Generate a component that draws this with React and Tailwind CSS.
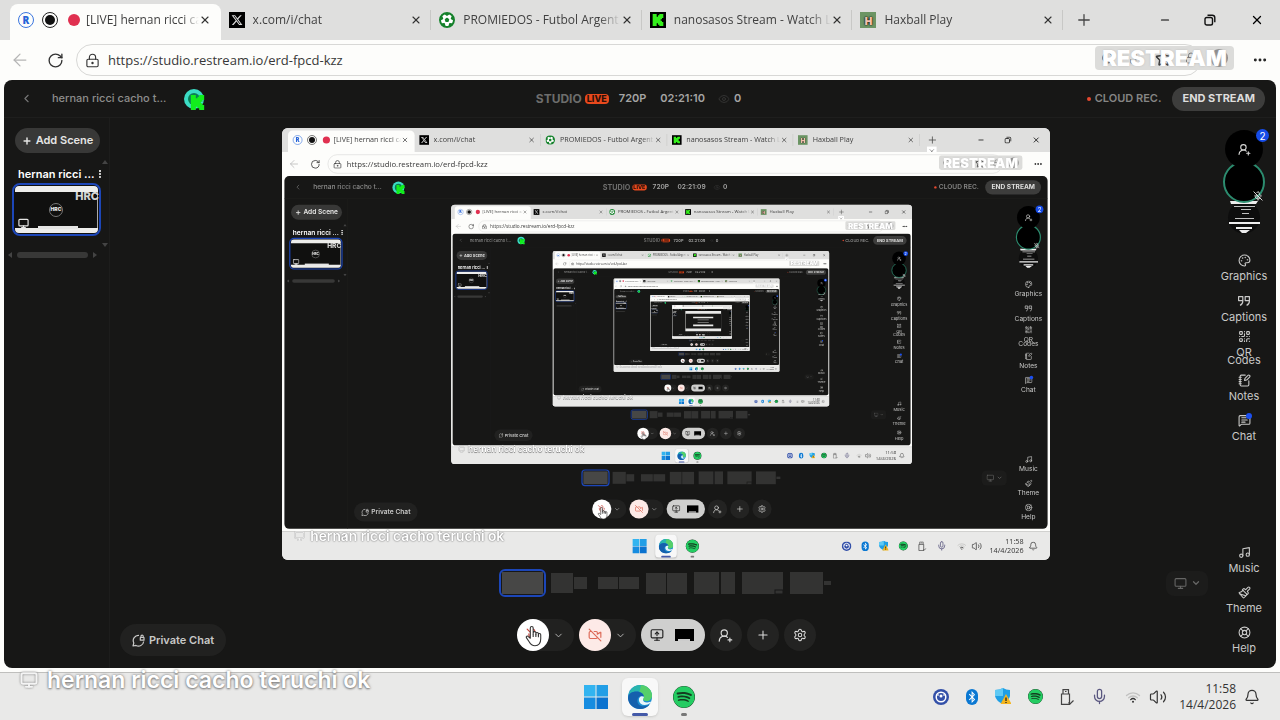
import React from "react";
import {
  ArrowLeft, ChevronDown, ChevronLeft, Plus, Minus, X, RotateCw, LockKeyhole, Ellipsis, EllipsisVertical,
  Eye, UserRoundPlus, Palette, QrCode, NotebookPen, MessageSquareText, Music, Paintbrush, LifeBuoy,
  Monitor, MonitorUp, VideoOff, MicOff, Settings, Mic, Wifi, Volume2, Bell, Star,
  Search, Download, Lock,
} from "lucide-react";
import { FaXTwitter, FaFutbol, FaSpotify, FaBluetoothB } from "react-icons/fa6";
import { SiKick } from "react-icons/si";

const MAX_DEPTH = 6;

const tabs = [
  { title: "x.com/i/chat", icon: <XIcon /> },
  { title: "PROMIEDOS - Futbol Argent", icon: <span className="grid size-4 place-items-center rounded-full bg-white"><FaFutbol className="size-4 text-[#15802b]" /></span> },
  { title: "nanosasos Stream - Watch Li", icon: <span className="grid size-4 place-items-center bg-black"><SiKick className="size-3 text-[#35f01c]" /></span> },
  { title: "Haxball Play", icon: <span className="grid size-4 place-items-center bg-[#6c9564] text-[11px] leading-none font-black text-[#f3c1ae] [text-shadow:0_0_2px_#000,0_0_1px_#000]">H</span> },
];

function XIcon() {
  return <span className="grid size-4 place-items-center bg-black"><FaXTwitter className="size-3 text-[#dcdcdc]" /></span>;
}

function TabTitle({ children }) {
  return (
    <span className="min-w-0 flex-1 overflow-hidden text-[12px] leading-5 whitespace-nowrap text-[#404040] [mask-image:linear-gradient(to_right,#000_86%,transparent)]">
      {children}
    </span>
  );
}

function TabStrip({ nested }) {
  return (
    <div className="flex h-10 shrink-0 bg-[#dfdfde] font-['Open_Sans',sans-serif]">
      <div className="grid min-w-0 flex-1 grid-cols-5 pl-[10px]">
        <div className="mt-1 flex min-w-0 items-center gap-2 rounded-t-lg bg-[#fdfdfb] pr-[10px] pb-1 pl-2">
          <span className="grid size-4 shrink-0 place-items-center rounded-full border border-[#3b76df] text-[10px] leading-none font-black text-[#2563d8]">R</span>
          <span className="grid size-4 shrink-0 place-items-center rounded-full border border-[#222]"><span className="size-[10px] rounded-full bg-[#111]" /></span>
          <span className="grid size-4 shrink-0 place-items-center"><span className="size-3 rounded-full bg-[#e03050]" /></span>
          <span className="-mr-2 -ml-1 flex min-w-0 flex-1"><TabTitle>[LIVE] hernan ricci ca</TabTitle></span>
          <button aria-label="Close tab"><X className="size-3 text-[#333]" strokeWidth={2.2} /></button>
        </div>
        {tabs.map((t) => (
          <div key={t.title} className="flex min-w-0 items-center">
            <div className="flex min-w-0 flex-1 items-center gap-2 pr-2 pl-2">
              <span className="shrink-0">{t.icon}</span>
              <span className="-mr-2 flex min-w-0 flex-1"><TabTitle>{t.title}</TabTitle></span>
              <button aria-label="Close tab"><X className="size-3 text-[#333]" strokeWidth={2.2} /></button>
            </div>
            <span className="h-5 w-px bg-[#c8c8c6]" />
          </div>
        ))}
      </div>
      <div className="flex w-[217px] shrink-0 items-center pr-4 pl-3">
        <button aria-label="New tab" className="relative">
          <Plus className="size-[18px] text-[#444]" strokeWidth={1.7} />
          {nested && <span className="absolute top-5 left-0 grid size-4 place-items-center bg-white"><X className="size-3 text-[#555]" /></span>}
        </button>
        <button aria-label="Minimize" className="mr-[33px] ml-auto"><Minus className="size-3 text-black" strokeWidth={2.4} /></button>
        <button aria-label="Restore" className="mr-[34px]">
          <svg viewBox="0 0 12 12" className="size-3" fill="none" stroke="#111" strokeWidth="1.4"><rect x="1" y="3.5" width="7.5" height="7.5" rx="1.8" /><path d="M3.5 1.2h4.7a2.6 2.6 0 0 1 2.6 2.6v4.4" /></svg>
        </button>
        <button aria-label="Close window"><X className="size-[14px] text-black" strokeWidth={2.2} /></button>
      </div>
    </div>
  );
}

function Toolbar() {
  return (
    <div className="relative flex h-10 shrink-0 items-center bg-[#fdfdfb] pr-3 pl-[10px] font-['Open_Sans',sans-serif]">
      <button aria-label="Back"><ArrowLeft className="size-5 text-[#b5b5b5]" strokeWidth={1.5} /></button>
      <button aria-label="Reload" className="mr-3 ml-[17px]"><RotateCw className="size-[17px] text-[#333]" strokeWidth={1.9} /></button>
      <label className="mr-[51px] flex h-8 flex-1 items-center gap-2 rounded-full border border-[#d8d8d6] px-2">
        <LockKeyhole className="size-[15px] text-[#333]" strokeWidth={1.8} />
        <input aria-label="Address" defaultValue="https://studio.restream.io/erd-fpcd-kzz" className="flex-1 bg-transparent text-[13px] leading-5 text-[#383838] outline-none" />
      </label>
      <button aria-label="Settings and more"><Ellipsis className="size-4 text-[#222]" strokeWidth={2.4} /></button>
      <div className="absolute top-[6px] right-[46px] flex h-6 w-[139px] items-center justify-around rounded-sm bg-[#dcdcda]">
        <Search className="size-[15px] text-[#333]" />
        <Download className="size-[14px] text-[#666]" />
        <Star className="size-[17px] text-[#333]" />
        <Lock className="size-3 text-[#777]" />
        <span className="size-[18px] rounded-full bg-[#8b8b8b]" />
        <span className="absolute inset-0 text-center font-['Inter',sans-serif] text-[22px] leading-6 font-black text-white [text-shadow:0_0_2px_#bbb]">RESTREAM</span>
      </div>
    </div>
  );
}

function StudioHeader({ clock }) {
  return (
    <header className="grid h-[38px] shrink-0 grid-cols-[1fr_auto_1fr] items-center border-b border-[#1e1e1d] pr-[11px] pl-4 text-[11px] font-semibold text-[#a5a5a4]">
      <div className="flex items-center">
        <button aria-label="Back to studio list"><ChevronLeft className="size-[13px] text-[#777]" /></button>
        <span className="ml-[19px] font-medium text-[#8d8d8c]">hernan ricci cacho t...</span>
        <span className="relative ml-[18px] grid size-5 place-items-center rounded-full bg-[#3bdcc4]">
          <span className="size-3 rounded-full bg-[#0b7d55]" />
          <SiKick className="absolute -right-px -bottom-px size-[15px] text-[#12ee1c]" />
        </span>
      </div>
      <div className="mr-2 flex items-center">
        <span className="text-[12px] font-bold text-[#6d6d6c]">STUDIO</span>
        <span className="ml-[3px] rounded-sm bg-[#e8491d] px-[2px] text-[9px] leading-[10px] font-extrabold text-[#2c1008]">LIVE</span>
        <span className="ml-[10px]">720P</span>
        <span className="ml-[14px]">02:21:{clock}</span>
        <Eye className="ml-[13px] size-3 text-[#333332]" />
        <span className="ml-1">0</span>
      </div>
      <div className="flex items-center justify-end">
        <span className="mr-1 size-1 rounded-full bg-[#e5482f]" />
        <span className="mr-[11px] text-[#858584]">CLOUD REC.</span>
        <button className="h-6 rounded-full bg-[#3d3d3c] px-[10px] font-bold text-[#dededd]">END STREAM</button>
      </div>
    </header>
  );
}

function ScenePanel() {
  return (
    <aside className="flex w-[106px] shrink-0 flex-col border-r border-[#1d1d1c] pt-[10px] pl-1 text-[11px] text-[#e5e5e4]">
      <button className="ml-[7px] flex h-[25px] w-[85px] items-center justify-center gap-1 rounded-full bg-[#383837] font-semibold"><Plus className="size-[10px]" strokeWidth={3.5} />Add Scene</button>
      <svg viewBox="0 0 6 4" className="mt-[7px] mr-px h-1 w-[6px] self-end"><path d="M3 0 6 4H0z" fill="#444" /></svg>
      <div className="mt-[2px] mr-[5px] ml-1 flex h-4 items-center font-semibold text-white">
        <span className="mr-1 ml-[2px] h-2 w-px bg-[#1f4fd0]" />
        <span className="flex-1 whitespace-nowrap">hernan ricci ...</span>
        <button aria-label="Scene options"><EllipsisVertical className="size-[10px]" strokeWidth={3} /></button>
      </div>
      <button aria-label="Scene hernan ricci" className="relative mt-px mr-2 ml-1 flex h-[53px] flex-col overflow-hidden rounded-lg border-2 border-[#1c46b8] bg-[#10100f] p-px">
        <span className="h-[6px] w-full rounded-t-sm bg-[#ededeb]" />
        <span className="flex w-full flex-1 items-center justify-center border-r border-[#aaa]">
          <span className="grid size-[14px] place-items-center rounded-full border border-[#777] text-[5px] font-black">HRC</span>
        </span>
        <span className="h-[5px] w-full rounded-b-sm bg-[#ededeb]" />
        <span className="absolute top-[5px] right-0 text-[11px] leading-3 font-extrabold text-[#d4d4d3]">HRC</span>
        <Monitor className="absolute bottom-[5px] left-1 size-[11px]" strokeWidth={2.6} />
        <span className="absolute bottom-[5px] left-6 h-[3px] w-10 bg-[#e4e4e3]" />
      </button>
      <svg viewBox="0 0 6 4" className="mt-[7px] mr-px h-1 w-[6px] self-end"><path d="M0 0H6L3 4z" fill="#444" /></svg>
      <div className="mt-[5px] mr-3 flex items-center justify-between">
        <svg viewBox="0 0 4 6" className="h-[6px] w-1"><path d="M4 0V6L0 3z" fill="#444" /></svg>
        <span className="h-[6px] w-[71px] rounded-full bg-[#383837]" />
        <svg viewBox="0 0 4 6" className="h-[6px] w-1"><path d="M0 0V6L4 3z" fill="#444" /></svg>
      </div>
    </aside>
  );
}

function Captions99() {
  return (
    <svg viewBox="0 0 14 14" className="size-[14px]" fill="none" stroke="currentColor" strokeWidth="1.2" strokeLinejoin="round">
      <path d="M5.8 6.6H1.6V2.6H5.8V7.2C5.8 9.2 4.8 10.6 3 11.4" />
      <path d="M12.4 6.6H8.2V2.6H12.4V7.2C12.4 9.2 11.4 10.6 9.6 11.4" />
    </svg>
  );
}

function PrivateChatIcon() {
  return (
    <svg viewBox="0 0 13 13" className="size-[13px]" fill="none" stroke="currentColor" strokeWidth="1.2" strokeLinejoin="round">
      <path d="M7 1.500A5.200 5.200 0 0 0 1.800 9L1 12l3-.6A5.200 5.200 0 0 0 11.700 7.500" />
      <path d="M8.300 3.500h3.700v2.700H8.300zM9 3.500V2.300a1.100 1.100 0 0 1 2.200 0V3.500" />
    </svg>
  );
}

function SideItem({ icon, label, dot }) {
  return (
    <button className="flex h-10 w-full flex-col items-center justify-center gap-[5px] text-[11px] leading-[8px] text-[#c9c9c8]">
      <span className="relative shrink-0">
        {icon}
        {dot && <span className="absolute -top-px -right-px size-[6px] rounded-full bg-[#1b4ff0]" />}
      </span>
      <span className="whitespace-pre-line">{label}</span>
    </button>
  );
}

function RightRail() {
  const c = "size-[13px]";
  return (
    <nav className="flex w-16 shrink-0 flex-col items-center pt-3 pb-[9px]">
      <div className="relative z-10">
        <button aria-label="Invite guests" className="grid size-[38px] place-items-center rounded-full bg-black"><UserRoundPlus className="size-[13px] text-[#d8d8d7]" /></button>
        <span className="absolute -top-px -right-[6px] grid size-[13px] place-items-center rounded-full bg-[#164ce8] text-[10px] leading-none text-white">2</span>
      </div>
      <div className="relative -mt-[7px] size-[42px] rounded-full border-2 border-[#2c8c6f] bg-black">
        <MicOff className="absolute right-0 bottom-0 size-[10px] text-white" />
      </div>
      <svg viewBox="0 0 34 33" className="mt-[-2px] h-[33px] w-[34px]">
        <circle cx="17" cy="16.5" r="16" fill="#0d0d0d" />
        <g fill="#ededed"><path d="M3 0H31L29 3H4zM2 21H33V23H2zM9 26H25V28H9zM12 29H23L19 32H15z" /><path d="M7 5h21v1H7zM14 8h10v1H14zM15 12h7v1h-7zM8 17h19v1H8z" opacity=".8" /></g>
      </svg>
      <div className="mt-[13px] w-full">
        <SideItem icon={<Palette className={c} />} label="Graphics" />
        <SideItem icon={<Captions99 />} label="Captions" />
        <SideItem icon={<QrCode className={c} />} label={"QR\nCodes"} />
        <SideItem icon={<NotebookPen className={c} />} label="Notes" />
        <SideItem icon={<MessageSquareText className={c} />} label="Chat" dot />
      </div>
      <div className="mt-auto w-full">
        <SideItem icon={<Music className={c} />} label="Music" />
        <SideItem icon={<Paintbrush className={c} />} label="Theme" />
        <SideItem icon={<LifeBuoy className={c} />} label="Help" />
      </div>
    </nav>
  );
}

const layouts = [
  { name: "Single", parts: [[0, 0, 41, 22]] },
  { name: "Focus with side", parts: [[1, 1, 22, 20], [24, 5, 13, 12]] },
  { name: "Wide pair", parts: [[0, 5, 20, 12], [21, 5, 20, 12]] },
  { name: "Split", parts: [[0, 1, 20, 21], [21, 1, 20, 21]] },
  { name: "Two thirds", parts: [[0, 0, 25, 22], [27, 0, 14, 22]] },
  { name: "Picture in picture", parts: [[0, 0, 41, 22], [33, 18, 8, 4]] },
  { name: "Presenter", parts: [[0, 0, 33, 22], [34, 9, 7, 4]] },
];

function LayoutPicker() {
  return (
    <div className="flex gap-px">
      {layouts.map((l, i) => (
        <button key={l.name} aria-label={l.name} className={i === 0 ? "grid h-7 w-[47px] place-items-center rounded-md border-2 border-[#1c46b8]" : "grid h-7 w-[47px] place-items-center"}>
          <svg viewBox="0 0 41 22" className="h-[22px] w-[41px]">
            {l.parts.map(([x, y, w, h], k) => (
              <rect key={k} x={x} y={y} width={w} height={h} fill={i === 0 ? "#474746" : "#333332"} stroke={l.name === "Picture in picture" && k ? "#171716" : "none"} />
            ))}
          </svg>
        </button>
      ))}
    </div>
  );
}

function HandCursor() {
  return (
    <svg viewBox="0 0 20 24" className="h-[22px] w-[18px]" fill="#fff" stroke="#333" strokeWidth="1.2" strokeLinejoin="round">
      <path d="M7 14.5V3a1.6 1.6 0 0 1 3.2 0v7V8.6a1.5 1.5 0 0 1 3 0v2-1a1.4 1.4 0 0 1 2.8 0v1.6-.6a1.3 1.3 0 0 1 2.6 0V15c0 4.5-2 7.8-6.4 7.8-3.6 0-5-1.6-6.3-4.1L2.6 13.800c-.7-1.500 1.200-2.400 2.200-1.200z" />
      <path d="M10.200 10v3M13.200 10v3M16 11v2.500" fill="none" />
    </svg>
  );
}

function Controls({ nested }) {
  const round = "grid size-8 place-items-center rounded-full bg-[#232322] text-[#dcdcdb]";
  return (
    <div className="mb-[5px] flex gap-[5px]">
      <div className="relative flex w-[57px] rounded-full bg-[#212120]">
        <button aria-label="Unmute microphone" className="grid size-8 place-items-center rounded-full bg-white"><MicOff className="size-[14px] text-[#c9443c]" /></button>
        <button aria-label="Microphone options" className="grid w-5 place-items-center text-[#bcbcbb]"><ChevronDown className="size-[11px]" /></button>
        <span className={nested ? "absolute top-3 left-2" : "absolute top-[6px] left-[7px]"}><HandCursor /></span>
      </div>
      <div className="flex w-[57px] rounded-full bg-[#212120]">
        <button aria-label="Turn camera on" className="grid size-8 place-items-center rounded-full bg-[#fdeae7]"><VideoOff className="size-[14px] text-[#dd6a58]" /></button>
        <button aria-label="Camera options" className="grid w-5 place-items-center text-[#bcbcbb]"><ChevronDown className="size-[11px]" /></button>
      </div>
      <div className="flex h-8 w-16 items-center justify-between rounded-full bg-[#cfcfce] pr-[11px] pl-[9px]">
        <button aria-label="Share screen"><MonitorUp className="size-[14px] text-[#222]" /></button>
        <button aria-label="Shared screen" className="flex h-3 w-[19px] items-end justify-center bg-black"><span className="h-[2px] w-3 bg-[#ccc]" /></button>
      </div>
      <button aria-label="Invite" className={round}><UserRoundPlus className="size-[15px]" strokeWidth={1.8} /></button>
      <button aria-label="Add source" className={round}><Plus className="size-[14px]" strokeWidth={1.8} /></button>
      <button aria-label="Settings" className={round}><Settings className="size-[14px]" strokeWidth={1.8} /></button>
    </div>
  );
}

function TunnelEnd() {
  return (
    <svg viewBox="0 0 32 18" className="size-full">
      <path d="M0 0H32V18H0z" fill="#171716" />
      <path d="M0 0H32V2.500H0zM0 15.500H32V18H0zM7 5H25V6.500H7zM7 12H25V13.500H7z" fill="#e9e9e8" />
      <path d="M11 7.500H21V8.200H11zM11 10H21V10.700H11z" fill="#8a8a89" />
    </svg>
  );
}

function Stage({ depth }) {
  return (
    <main className="flex min-w-0 flex-1 flex-col pt-[10px] pb-3 pl-[10px]">
      <div className="flex min-h-0 flex-1 justify-center">
        <div className="aspect-video h-full overflow-hidden rounded-md bg-[#e9e9e8]" inert aria-hidden="true">
          {depth < MAX_DEPTH ? (
            <div className="h-[166.667%] w-[166.667%] origin-top-left scale-60">
              <Desktop depth={depth + 1} />
            </div>
          ) : (
            <TunnelEnd />
          )}
        </div>
      </div>
      <div className="mt-[9px] grid grid-cols-[1fr_auto_1fr] items-center">
        <span />
        <LayoutPicker />
        <button aria-label="Screen options" className="mr-1 flex h-[25px] w-[42px] items-center justify-center gap-1 justify-self-end rounded-lg bg-[#1c1c1b] text-[#666665]"><Monitor className="size-[13px]" /><ChevronDown className="size-[10px]" strokeWidth={3} /></button>
      </div>
      <div className="mt-[22px] grid grid-cols-[1fr_auto_1fr] items-end">
        <button className="flex h-8 w-[106px] items-center justify-center gap-1 rounded-full bg-[#212120] text-[11px] font-semibold text-[#c9c9c8]"><PrivateChatIcon />Private Chat</button>
        <Controls nested={depth > 0} />
        <span />
      </div>
    </main>
  );
}

function EdgeLogo() {
  return (
    <svg viewBox="0 0 24 24" className="size-6">
      <circle cx="12" cy="12" r="12" fill="#1d8fd0" />
      <path d="M.5 10C2 4 6.500 0 12 0c7 0 12 5 12 10.500 0 3.500-2.500 5.500-5.500 5.500-2 0-3.500-.7-3.500-1.700 0-.6.9-1 .9-2.500C15.900 8.500 12.500 6.500 9 6.500 5 6.500 2 8 .5 10z" fill="#29b6ad" />
      <path d="M13 0c6.500.5 11 5.300 11 10.500 0 3.500-2.500 5.500-5.500 5.500-2 0-3.500-.7-3.500-1.700 0-.6.9-1 .9-2.500 0-2.500-2-4.300-4.400-5z" fill="#55cf6a" />
      <path d="M0 13C.5 8.500 4 6.500 8.500 6.500c4 0 7.400 2.400 7.400 5.300-2-1.500-6-.8-6.500 3.200-.5 4.500 3.500 7.500 9 5.800 1.500-.5 2.500-1 3-1C19.500 22.500 16 24 12 24 5 24 0 18.500 0 13z" fill="#1560ad" />
      <path d="M15.900 11.800c-2.500-1.700-5.400.2-5 3.700.5 4 6 6.500 11.800 2.300.7-.5.2-1.300-.4-1-1.100.5-2.100.7-3.300.7-2.600 0-4-1.400-4-2.800 0-1.300.9-1.400.9-2.900z" fill="#eaf6fb" />
    </svg>
  );
}

function Taskbar() {
  return (
    <footer className="grid h-12 shrink-0 grid-cols-[1fr_auto_1fr] items-center border-t border-[#bfbfbd] bg-[#e9e9e8] font-['Open_Sans',sans-serif] text-[#333]">
      <span />
      <div className="flex items-center gap-[14px]">
        <button aria-label="Start"><svg viewBox="0 0 24 24" className="size-6"><path d="M0 0H11.500V11.500H0z" fill="#32b4f0" /><path d="M12.500 0H24V11.500H12.500z" fill="#229ee6" /><path d="M0 12.500H11.500V24H0z" fill="#168ce0" /><path d="M12.500 12.500H24V24H12.500z" fill="#0a72cf" /></svg></button>
        <button aria-label="Edge" className="relative grid h-[38px] w-9 place-items-center rounded-md bg-[#f8f8f8] shadow-sm"><EdgeLogo /><span className="absolute bottom-0 h-[3px] w-4 rounded-full bg-[#4459a8]" /></button>
        <button aria-label="Spotify" className="relative grid h-[38px] w-6 place-items-center"><FaSpotify className="size-[22px] rounded-full bg-[#143d20] text-[#24cc62]" /><span className="absolute bottom-0 h-[3px] w-[6px] rounded-full bg-[#777]" /></button>
      </div>
      <div className="flex items-center justify-end gap-[17px] pr-5">
        <svg viewBox="0 0 16 16" className="size-4"><circle cx="8" cy="8" r="8" fill="#3350a8" /><circle cx="8" cy="8" r="4.800" fill="none" stroke="#fff" strokeWidth="1.500" /><circle cx="8" cy="7" r="1.500" fill="#fff" /><path d="M3 6H6M10 6H13" stroke="#fff" /></svg>
        <span className="grid h-4 w-3 place-items-center rounded-md bg-[#0b78d2]"><FaBluetoothB className="size-3 text-white" /></span>
        <svg viewBox="0 0 16 17" className="h-[17px] w-4"><path d="M0 2Q5 2 8 0Q11 2 15 2V8Q14 13 8 16Q1 13 0 8z" fill="#1e9fe4" /><path d="M0 2Q5 2 8 0V8H0z" fill="#5fc9f3" /><path d="M11 6 16.500 16H5.500z" fill="#f4b51e" /><path d="M11 9.500V13M11 14V15" stroke="#222" strokeWidth="1.300" /></svg>
        <FaSpotify className="size-[15px] rounded-full bg-[#143d20] text-[#24cc62]" />
        <svg viewBox="0 0 14 16" className="h-4 w-[14px]" fill="none" stroke="#444" strokeWidth="1.200"><path d="M3 5V.700H8.500V5M1.500 5H9.500V15.300H1.500zM5 2.500H6.500" /><path d="M8.500 13.500 10 15 13.500 11.500" /></svg>
        <Mic className="size-[17px] text-[#5a5780]" strokeWidth={1.800} />
        <div className="flex items-center gap-2">
          <svg viewBox="0 0 16 16" className="size-4" fill="none" strokeWidth="1.300" strokeLinecap="round"><path d="M1.500 6.500a9.200 9.200 0 0 1 13 0M3.700 8.800a6 6 0 0 1 8.600 0" stroke="#c2c2c1" /><path d="M5.700 10.600a3.300 3.300 0 0 1 4.600 0" stroke="#333" /><circle cx="8" cy="12.700" r="1" fill="#333" /></svg>
          <Volume2 className="size-[18px] text-[#333]" strokeWidth={1.600} />
          <time className="ml-1 text-right text-[12px] leading-4">11:58<br />14/4/2026</time>
          <Bell className="size-4 text-[#333]" strokeWidth={1.800} />
        </div>
      </div>
    </footer>
  );
}

function Desktop({ depth }) {
  return (
    <div className="relative flex h-full w-full flex-col overflow-hidden bg-[#fdfdfb] font-['Inter',sans-serif]">
      <TabStrip nested={depth > 0} />
      <Toolbar />
      <section className="mx-1 mb-1 flex min-h-0 flex-1 flex-col overflow-hidden rounded-lg bg-[#171716]">
        <StudioHeader clock={depth > 0 ? "09" : "10"} />
        <div className="flex min-h-0 flex-1">
          <ScenePanel />
          <Stage depth={depth} />
          <RightRail />
        </div>
      </section>
      <Taskbar />
      <div className="absolute bottom-[26px] left-5 flex items-center gap-[9px] text-[23px] leading-7 font-semibold text-white [text-shadow:0_0_3px_#777,0_1px_2px_#888]">
        <Monitor className="size-[18px] text-[#f4f4f4] drop-shadow-[0_0_1px_#777]" strokeWidth={2.600} />
        hernan ricci cacho teruchi ok
      </div>
    </div>
  );
}

export default function App() {
  return (
    <div className="h-screen min-h-[480px] w-full">
      <Desktop depth={0} />
    </div>
  );
}
